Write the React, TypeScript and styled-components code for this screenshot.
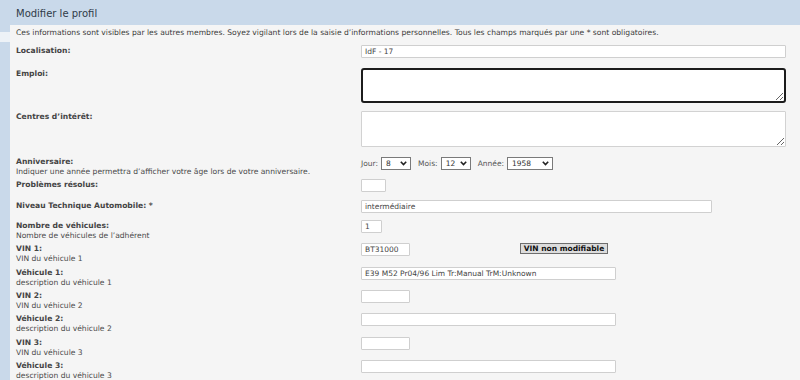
import React from 'react';
import styled, { createGlobalStyle } from 'styled-components';

const GlobalStyle = createGlobalStyle`
  html, body {
    margin: 0;
    padding: 0;
    background: #c9d9ea;
  }
  body {
    font-family: 'DejaVu Sans', Verdana, sans-serif;
  }
`;

type Field = {
  label: string;
  sub?: string;
  h: number;
  kind: 'vin' | 'desc';
  value?: string;
};

const vehicles: Field[] = [
  { label: 'VIN 1:', sub: 'VIN du véhicule 1', h: 24, kind: 'vin', value: 'BT31000' },
  { label: 'Véhicule 1:', sub: 'description du véhicule 1', h: 23, kind: 'desc', value: 'E39 M52 Pr04/96 Lim Tr:Manual TrM:Unknown' },
  { label: 'VIN 2:', sub: 'VIN du véhicule 2', h: 23, kind: 'vin' },
  { label: 'Véhicule 2:', sub: 'description du véhicule 2', h: 24, kind: 'desc' },
  { label: 'VIN 3:', sub: 'VIN du véhicule 3', h: 23, kind: 'vin' },
  { label: 'Véhicule 3:', sub: 'description du véhicule 3', h: 23, kind: 'desc' },
];

function Chevron() {
  return (
    <ChevronIcon width="7" height="5" viewBox="0 0 7 5">
      <polyline points="0.8,0.8 3.5,3.6 6.2,0.8" fill="none" stroke="#222" strokeWidth="1.6" />
    </ChevronIcon>
  );
}

function DateSelect({ value, w }: { value: string; w: number }) {
  return (
    <SelectWrap>
      <Select $w={w} defaultValue={value}>
        <option value={value}>{value}</option>
      </Select>
      <Chevron />
    </SelectWrap>
  );
}

function App() {
  return (
    <>
      <GlobalStyle />
      <Page>
        <Header>
          <Title>Modifier le profil</Title>
        </Header>
        <Body>
          <Side>
            <SideMark />
          </Side>
          <Panel>
            <Intro>
              Ces informations sont visibles par les autres membres. Soyez vigilant lors de la saisie
              d’informations personnelles. Tous les champs marqués par une * sont obligatoires.
            </Intro>
            <Form>
              <Row $h={23}>
                <LabelCell>
                  <Label>Localisation:</Label>
                </LabelCell>
                <FieldCell>
                  <TextInput $w={425} defaultValue="IdF - 17" />
                </FieldCell>
              </Row>
              <Row $h={43}>
                <LabelCell>
                  <Label>Emploi:</Label>
                </LabelCell>
                <FieldCell>
                  <Area $h={35} $focused />
                </FieldCell>
              </Row>
              <Row $h={45}>
                <LabelCell>
                  <Label>Centres d’intérêt:</Label>
                </LabelCell>
                <FieldCell>
                  <Area $h={36} />
                </FieldCell>
              </Row>
              <Row $h={23}>
                <LabelCell>
                  <Label>Anniversaire:</Label>
                  <Sub>Indiquer une année permettra d’afficher votre âge lors de votre anniversaire.</Sub>
                </LabelCell>
                <DateFields>
                  <DateLabel>Jour:</DateLabel>
                  <DateSelect value="8" w={30} />
                  <DateLabel>Mois:</DateLabel>
                  <DateSelect value="12" w={30} />
                  <DateLabel>Année:</DateLabel>
                  <DateSelect value="1958" w={46} />
                </DateFields>
              </Row>
              <Row $h={21}>
                <LabelCell>
                  <Label>Problèmes résolus:</Label>
                </LabelCell>
                <FieldCell>
                  <TextInput $w={25} />
                </FieldCell>
              </Row>
              <Row $h={20}>
                <LabelCell>
                  <Label>Niveau Technique Automobile: *</Label>
                </LabelCell>
                <FieldCell>
                  <TextInput $w={351} defaultValue="intermédiaire" />
                </FieldCell>
              </Row>
              <Row $h={23}>
                <LabelCell>
                  <Label>Nombre de véhicules:</Label>
                  <Sub>Nombre de véhicules de l’adhérent</Sub>
                </LabelCell>
                <FieldCell>
                  <TextInput $w={21} defaultValue="1" />
                </FieldCell>
              </Row>
              {vehicles.map((v, i) => (
                <Row key={v.label} $h={v.h}>
                  <LabelCell>
                    <Label>{v.label}</Label>
                    <Sub>{v.sub}</Sub>
                  </LabelCell>
                  <FieldCell>
                    <TextInput $w={v.kind === 'vin' ? 49 : 255} defaultValue={v.value || ''} />
                    {i === 0 ? <LockButton type="button">VIN non modifiable</LockButton> : null}
                  </FieldCell>
                </Row>
              ))}
            </Form>
          </Panel>
        </Body>
      </Page>
    </>
  );
}

const Page = styled.div`
  width: 800px;
  height: 380px;
  overflow: hidden;
  display: flex;
  flex-direction: column;
  background: #c9d9ea;
`;

const Header = styled.header`
  flex-shrink: 0;
  height: 25px;
  display: flex;
  align-items: center;
  padding: 2px 0 0 16px;
  box-sizing: border-box;
`;

const Title = styled.h1`
  margin: 0;
  font-size: 10px;
  font-weight: normal;
  color: #2f3b48;
`;

const Body = styled.div`
  flex: 1;
  min-height: 0;
  display: flex;
  overflow: hidden;
`;

const Side = styled.aside`
  width: 10px;
  flex-shrink: 0;
  padding-top: 7px;
`;

const SideMark = styled.div`
  height: 10px;
  background: #edf2f7;
`;

const Panel = styled.main`
  flex: 1;
  background: #f5f5f5;
  padding: 3px 14px 0 6px;
`;

const Intro = styled.p`
  margin: 0;
  font-size: 7.6px;
  line-height: 10px;
  color: #3c3c3c;
  white-space: nowrap;
`;

const Form = styled.div`
  margin-top: 7px;
  display: flex;
  flex-direction: column;
`;

const Row = styled.div<{ $h: number }>`
  flex-shrink: 0;
  height: ${(p) => p.$h}px;
  display: grid;
  grid-template-columns: 345px 1fr;
  align-items: start;
`;

const LabelCell = styled.div`
  display: flex;
  flex-direction: column;
  padding-top: 1px;
  line-height: 10px;
`;

const Label = styled.span`
  font-size: 7.6px;
  font-weight: bold;
  color: #444;
`;

const Sub = styled.span`
  font-size: 7.6px;
  color: #4a4a4a;
  white-space: nowrap;
`;

const FieldCell = styled.div`
  display: flex;
  align-items: flex-start;
`;

const TextInput = styled.input<{ $w: number }>`
  width: ${(p) => p.$w}px;
  height: 13px;
  box-sizing: border-box;
  margin: 0;
  padding: 0 3px;
  border: 1px solid #cfcfcf;
  border-radius: 1px;
  background: #fff;
  font-family: 'DejaVu Sans', Verdana, sans-serif;
  font-size: 7.5px;
  color: #444;
  outline: none;
`;

const Area = styled.textarea<{ $h: number; $focused?: boolean }>`
  display: block;
  width: 425px;
  height: ${(p) => p.$h}px;
  box-sizing: border-box;
  margin: 0;
  padding: 2px 3px;
  background: #fff;
  border: ${(p) => (p.$focused ? '2px solid #1c1c1c' : '1px solid #d2d2d2')};
  border-radius: ${(p) => (p.$focused ? '3px' : '1px')};
  font-family: 'DejaVu Sans', Verdana, sans-serif;
  font-size: 7.5px;
  outline: none;
`;

const DateFields = styled.div`
  display: flex;
  align-items: center;
  gap: 3px;
  padding-top: 1px;
`;

const DateLabel = styled.span`
  font-size: 7.5px;
  color: #555;
  margin-left: 4px;
  &:first-child {
    margin-left: 0;
  }
`;

const SelectWrap = styled.span`
  position: relative;
  display: inline-flex;
`;

const Select = styled.select<{ $w: number }>`
  appearance: none;
  width: ${(p) => p.$w}px;
  height: 13px;
  box-sizing: border-box;
  margin: 0;
  padding: 0 0 0 4px;
  border: 1px solid #7a7a7a;
  border-radius: 0;
  background: #fff;
  font-family: 'DejaVu Sans', Verdana, sans-serif;
  font-size: 7.5px;
  color: #333;
  outline: none;
`;

const ChevronIcon = styled.svg`
  position: absolute;
  right: 4px;
  top: 4px;
  pointer-events: none;
`;

const LockButton = styled.button`
  margin: 0 0 0 110px;
  height: 11px;
  width: 88px;
  padding: 0;
  box-sizing: border-box;
  border: 1px solid #6d6d6d;
  background: #dcdcdc;
  font-family: 'DejaVu Sans', Verdana, sans-serif;
  font-size: 7.5px;
  font-weight: bold;
  line-height: 9px;
  color: #111;
`;

export default App;
